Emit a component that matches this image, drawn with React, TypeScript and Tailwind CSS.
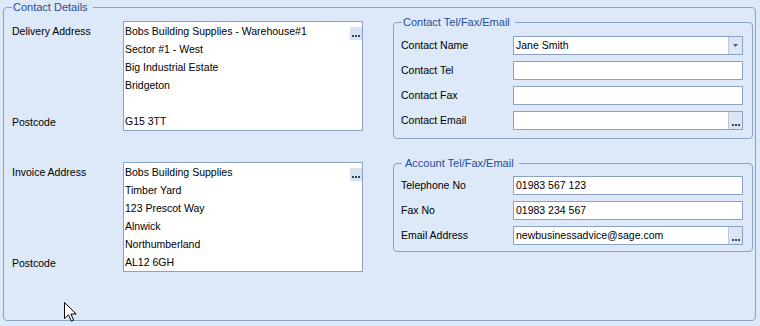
import React from 'react'

function Dots() {
  return (
    <div className="flex gap-[1px]">
      <span className="w-[2px] h-[2px] bg-[#3a4656]" />
      <span className="w-[2px] h-[2px] bg-[#3a4656]" />
      <span className="w-[2px] h-[2px] bg-[#3a4656]" />
    </div>
  )
}

function Field({ label, value, kind }: { label: string; value?: string; kind?: 'combo' | 'more' }) {
  return (
    <div className="flex items-center h-[19px]">
      <div className="w-[112px] leading-[19px]">{label}</div>
      <div className="relative w-[230px] h-[19px] bg-white border border-[#8aa3c4] pl-[2px] leading-[17px] whitespace-nowrap">
        {value}
        {kind === 'combo' && (
          <div className="absolute right-0 top-0 bottom-0 w-[14px] bg-[#dce6f3] border-l border-[#b7c8dd] flex items-center justify-center">
            <svg width="5" height="3" viewBox="0 0 5 3">
              <path d="M0 0h5L2.5 3z" fill="#4f5f78" />
            </svg>
          </div>
        )}
        {kind === 'more' && (
          <div className="absolute right-0 top-0 bottom-0 w-[14px] bg-[#dce6f3] border-l border-[#b7c8dd] flex items-end justify-center pb-[3px]">
            <Dots />
          </div>
        )}
      </div>
    </div>
  )
}

function Address({ label, lines }: { label: string; lines: string[] }) {
  return (
    <div className="flex">
      <div className="w-[111px] h-[110px] flex flex-col justify-between">
        <div className="leading-[18px] mt-[1px]">{label}</div>
        <div className="leading-[18px]">Postcode</div>
      </div>
      <div className="relative w-[240px] h-[110px] bg-white border border-[#8aa3c4] pl-[1px]">
        {lines.map((l, i) => (
          <div key={i} className="leading-[18px] h-[18px] whitespace-nowrap">{l}</div>
        ))}
        <div className="absolute right-0 top-[5px] w-[12px] h-[13px] bg-[#d6e2f2] flex items-end justify-center pb-[3px]">
          <Dots />
        </div>
      </div>
    </div>
  )
}

export default function App() {
  return (
    <div className="relative w-[760px] h-[326px] bg-[#dde9f8] overflow-hidden text-[10.5px] text-black font-['Liberation_Sans',Arial,sans-serif]">
      <fieldset className="ml-[3px] w-[753px] h-[321px] border border-[#8ba3c6] rounded-[4px]">
        <legend className="ml-[8px] pl-[1px] pr-[5px] leading-[14px] text-[11px] text-[#1f4d9b]">Contact Details</legend>
        <div className="flex items-start pl-[8px]">
          <div className="flex flex-col gap-[31px] pt-[7px]">
            <Address
              label="Delivery Address"
              lines={['Bobs Building Supplies - Warehouse#1', 'Sector #1 - West', 'Big Industrial Estate', 'Bridgeton', '', 'G15 3TT']}
            />
            <Address
              label="Invoice Address"
              lines={['Bobs Building Supplies', 'Timber Yard', '123 Prescot Way', 'Alnwick', 'Northumberland', 'AL12 6GH']}
            />
          </div>
          <div className="ml-[30px] pt-[1px] flex flex-col">
            <fieldset className="w-[360px] border border-[#8ba3c6] rounded-[4px] pl-[7px] pt-[7px] pb-[8px]">
              <legend className="ml-[1px] pl-[1px] pr-[5px] leading-[14px] text-[11px] text-[#1f4d9b]">Contact Tel/Fax/Email</legend>
              <div className="flex flex-col gap-[6px]">
                <Field label="Contact Name" value="Jane Smith" kind="combo" />
                <Field label="Contact Tel" />
                <Field label="Contact Fax" />
                <Field label="Contact Email" kind="more" />
              </div>
            </fieldset>
            <fieldset className="mt-[17px] w-[360px] border border-[#8ba3c6] rounded-[4px] pl-[7px] pt-[6px] pb-[6px]">
              <legend className="ml-[1px] pl-[3px] pr-[5px] leading-[14px] text-[11px] text-[#1f4d9b]">Account Tel/Fax/Email</legend>
              <div className="flex flex-col gap-[6px]">
                <Field label="Telephone No" value="01983 567 123" />
                <Field label="Fax No" value="01983 234 567" />
                <Field label="Email Address" value="newbusinessadvice@sage.com" kind="more" />
              </div>
            </fieldset>
          </div>
        </div>
      </fieldset>
      <svg className="absolute left-[64px] top-[302px]" width="13" height="20" viewBox="0 0 13 20">
        <path d="M0.5 0.5V16.5L4.5 12.8L7.3 19.2L9.6 18.2L6.9 12H12.2Z" fill="white" stroke="black" strokeWidth="1" strokeLinejoin="round" />
      </svg>
    </div>
  )
}
